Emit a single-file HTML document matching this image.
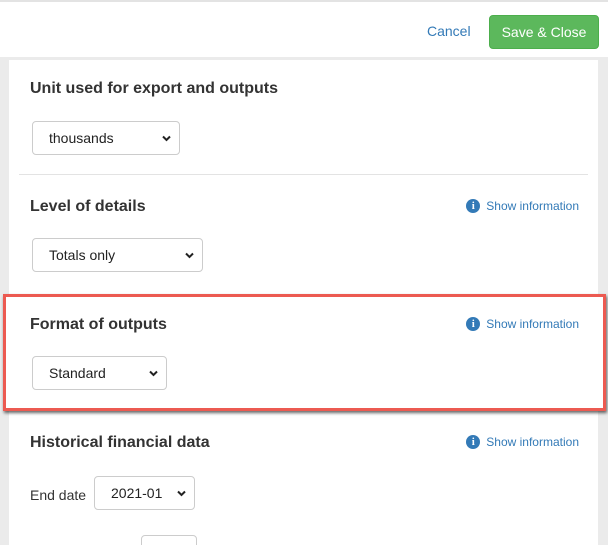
<!DOCTYPE html>
<html><head><style>
*{box-sizing:border-box;margin:0;padding:0}
html,body{width:608px;height:545px;overflow:hidden}
body{background:#ebebeb;font-family:"Liberation Sans",Arial,sans-serif;position:relative}
.hdr{position:absolute;left:0;top:0;width:608px;height:57px;background:#fff;border-top:2px solid #e3e3e3}
.cancel{position:absolute;left:427px;top:21px;font-size:14px;color:#337ab7}
.save{position:absolute;left:489px;top:13px;width:110px;height:34px;background:#5cb85c;border:1px solid #4cae4c;border-radius:4px;color:#fff;font-size:14px;line-height:32px;text-align:center}
.panel{position:absolute;left:9px;top:60px;width:589px;height:485px;background:#fff}
h3{position:absolute;left:30px;font-size:16px;font-weight:bold;color:#333}
.sel{position:absolute;left:32px;height:34px;border:1px solid #ccc;border-radius:4px;background:#fff;font-size:14px;color:#222;padding-left:16px;line-height:32px}
.sel svg{position:absolute;right:8px;top:13px}
.info{position:absolute;right:29px;font-size:12px;color:#337ab7;display:flex;align-items:center;gap:6px}
.ic{width:14px;height:14px;border-radius:50%;background:#337ab7;color:#fff;font:bold 11px "Liberation Serif",serif;text-align:center;line-height:14px}
.hr{position:absolute;left:19px;width:569px;top:174px;border-top:1px solid #e3e3e3}
.red{position:absolute;left:3px;top:294px;width:603px;height:117px;border:3px solid #ec5a51;box-shadow:1px 2px 3px rgba(0,0,0,.6);background:#fff}
</style></head><body>
<div class="hdr"><span class="cancel">Cancel</span><div class="save">Save &amp; Close</div></div>
<div class="panel"></div>
<h3 style="top:80px">Unit used for export and outputs</h3>
<div class="sel" style="top:121px;width:148px">thousands<svg width="9" height="7" viewBox="0 0 9 7"><path d="M1 1.5l3.5 3.5 3.5-3.5" stroke="#222" stroke-width="2" fill="none"/></svg></div>
<div class="hr"></div>
<h3 style="top:198px">Level of details</h3>
<div class="info" style="top:199px"><span class="ic">i</span>Show information</div>
<div class="sel" style="top:238px;width:171px">Totals only<svg width="9" height="7" viewBox="0 0 9 7"><path d="M1 1.5l3.5 3.5 3.5-3.5" stroke="#222" stroke-width="2" fill="none"/></svg></div>
<div class="red"></div>
<h3 style="top:316px">Format of outputs</h3>
<div class="info" style="top:317px"><span class="ic">i</span>Show information</div>
<div class="sel" style="top:356px;width:135px">Standard<svg width="9" height="7" viewBox="0 0 9 7"><path d="M1 1.5l3.5 3.5 3.5-3.5" stroke="#222" stroke-width="2" fill="none"/></svg></div>
<h3 style="top:434px">Historical financial data</h3>
<div class="info" style="top:435px"><span class="ic">i</span>Show information</div>
<span style="position:absolute;left:30px;top:487px;font-size:14px;color:#333">End date</span>
<div class="sel" style="left:94px;top:476px;width:101px;padding-left:16px">2021-01<svg width="9" height="7" viewBox="0 0 9 7"><path d="M1 1.5l3.5 3.5 3.5-3.5" stroke="#222" stroke-width="2" fill="none"/></svg></div>
<div class="sel" style="left:141px;top:535px;width:56px"></div>
</body></html>
